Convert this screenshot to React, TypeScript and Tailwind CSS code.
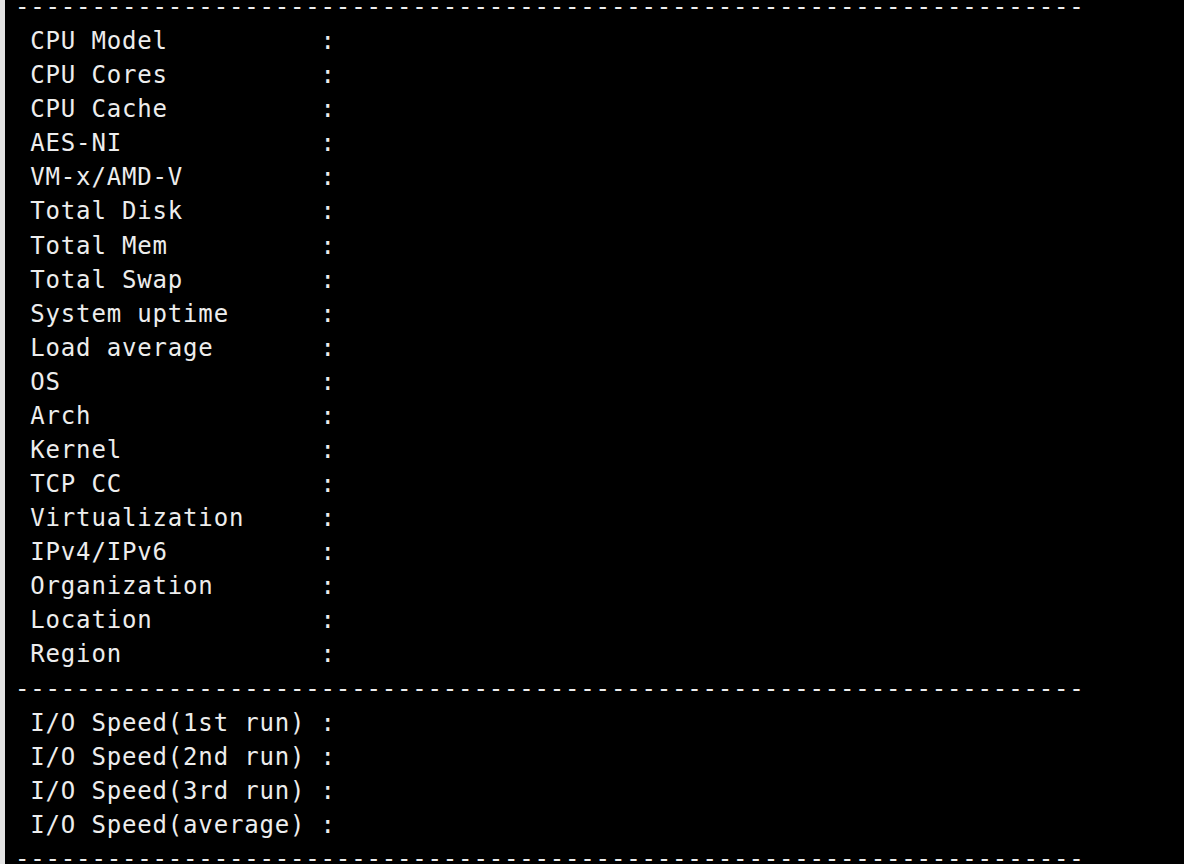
const sysRows = [
  "CPU Model",
  "CPU Cores",
  "CPU Cache",
  "AES-NI",
  "VM-x/AMD-V",
  "Total Disk",
  "Total Mem",
  "Total Swap",
  "System uptime",
  "Load average",
  "OS",
  "Arch",
  "Kernel",
  "TCP CC",
  "Virtualization",
  "IPv4/IPv6",
  "Organization",
  "Location",
  "Region",
];

const ioRows = [
  "I/O Speed(1st run)",
  "I/O Speed(2nd run)",
  "I/O Speed(3rd run)",
  "I/O Speed(average)",
];

const divider = "-".repeat(70);

const row = (label: string) => " " + label.padEnd(19) + ":";

const App = () => {
  const lines = [
    divider,
    ...sysRows.map(row),
    divider,
    ...ioRows.map(row),
    divider,
  ];

  return (
    <div className="h-screen w-full overflow-hidden border-l-[5px] border-[#e4e4e4] bg-black pl-[10px]">
      <pre className="-mt-[10px] font-['DejaVu_Sans_Mono','Liberation_Mono',monospace] text-[24px] leading-[34.08px] tracking-[0.83px] whitespace-pre text-[#ededed]">
        {lines.join("\n")}
      </pre>
    </div>
  );
};

export default App;
